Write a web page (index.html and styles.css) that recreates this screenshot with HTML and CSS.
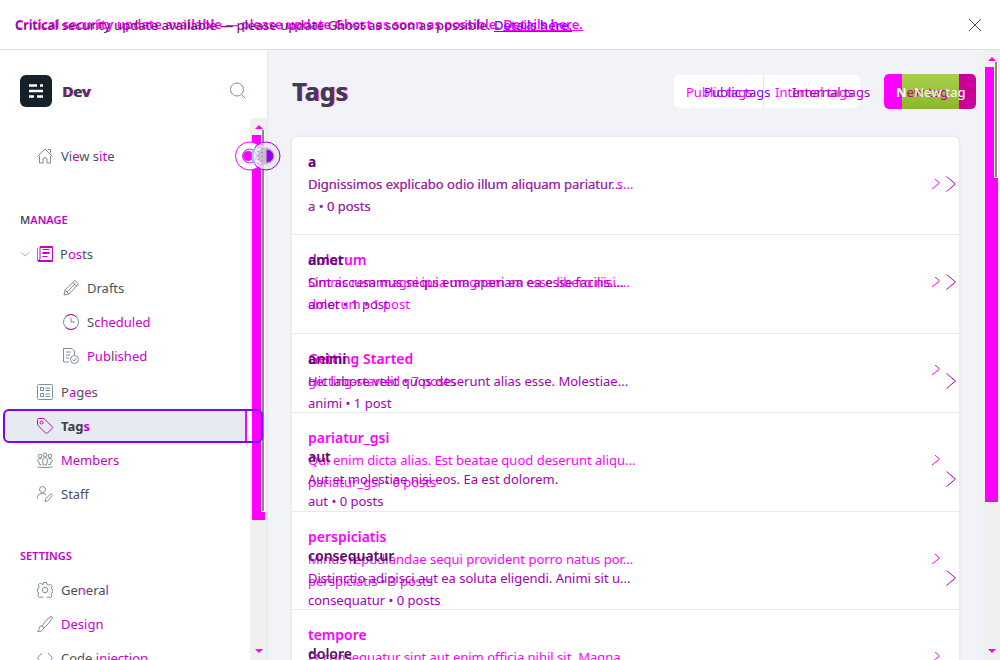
FILE: index.html
```html
<!DOCTYPE html>
<html lang="en">
<head>
<meta charset="utf-8">
<title>Tags</title>
<link rel="stylesheet" href="styles.css">
</head>
<body>
<header class="banner">
  <div class="stack banner-text">
    <p class="new">Critical security update available — please update Ghost as soon as possible. <a href="#">Details here.</a></p>
    <p class="old">Critical security update available — please update Ghost as soon as possible. <a href="#">Details here.</a></p>
  </div>
  <button class="close" aria-label="Close"><svg width="14" height="14" viewBox="0 0 14 14"><path d="M1 1l12 12M13 1L1 13"/></svg></button>
</header>
<div class="app">
  <aside class="sidebar">
    <div class="brand">
      <svg class="logo" width="32" height="32" viewBox="0 0 32 32"><rect width="32" height="32" rx="6" fill="#15212a"/><path d="M9 10.500h8M20 10.500h3M9 16h14M9 21.500h5M17 21.500h6" stroke="#fff" stroke-width="2.500" fill="none"/></svg>
      <strong>Dev</strong>
      <button class="search" aria-label="Search"><svg width="18" height="18" viewBox="0 0 18 18"><circle cx="8" cy="7.500" r="6.500"/><path d="M12.500 12.500l4 4"/></svg></button>
    </div>
    <div class="scroll-area">
      <nav>
        <a class="item" href="#"><svg viewBox="0 0 16 16"><path d="M.5 8.500L8 1l7.500 7.500M2.500 8v7h3.500v-4.500q2-2 4 0V15h3.500V8M11 1.500h2.500V5"/></svg><span>Vi<i>e</i>w s<i>it</i>e</span></a>
        <h2>M<i>ANAGE</i></h2>
        <a class="item posts" href="#"><svg class="caret" viewBox="0 0 10 6"><path d="M.5 1L5 5l4.500-4"/></svg><svg viewBox="0 0 16 16"><path d="M.5 2v13"/><path class="hot" d="M3 .5h12.500v15H1M3 1.500h12M3 1v12.500L1 14.500h14M5.500 3.500h7M5.500 6.500h7M5.500 7.500h7M5.500 10.500h5"/></svg><span>P<i>os</i>ts</span></a>
        <div class="sub">
          <a class="item" href="#"><svg viewBox="0 0 16 16"><path d="M1 15l1-5L12 .5l3.500 3.500L6 14zM2 10l4 4M10 2.500L13.500 6M4 12l8.500-8.500"/></svg><span>Drafts</span></a>
          <a class="item" href="#"><svg viewBox="0 0 16 16"><circle cx="8" cy="8" r="7.500"/><path class="hot" d="M2.700 2.700a7.500 7.500 0 0110.600 0M2.700 13.300a7.500 7.500 0 0010.600 0"/><path d="M8 3.500V8h4"/></svg><span>S<i>cheduled</i></span></a>
          <a class="item" href="#"><svg viewBox="0 0 16 16"><path d="M6 14H.5V.5H9L11.500 3v4M3 4h5M3 7h4M3 10h3"/><circle cx="11.500" cy="11.500" r="4"/><path d="M9.500 11.500l1.500 1.500 2.500-3"/></svg><span><i>Pub</i>l<i>ished</i></span></a>
        </div>
        <a class="item" href="#"><svg viewBox="0 0 16 16"><rect x=".5" y=".5" width="15" height="15" rx="1"/><path d="M3.500 3.500h3v3h-3zM3.500 9.500h3v3h-3zM8.500 4H13M8.500 6.500H13M8.500 10H13M8.500 12.500H13"/></svg><span>P<i>a</i>g<i>e</i>s</span></a>
        <a class="item active" href="#"><svg class="hot" viewBox="0 0 16 16"><path d="M.5 6V1.500l1-1H6q1 0 2 1L15 8.500q1 1 0 2L10.500 15q-1 1-2 0L1 7.500z"/><circle cx="4.500" cy="4.500" r="1.500"/></svg><span>Tag<i>s</i></span></a>
        <a class="item" href="#"><svg viewBox="0 0 16 16"><circle cx="8" cy="3" r="2"/><circle cx="3" cy="4" r="1.800"/><circle cx="13" cy="4" r="1.800"/><path d="M5.500 9q0-3.500 2.500-3.500T10.500 9L9.500 13h-3zM4.500 12.500H2.500L2 10Q.5 10 .5 8.500 1 6.500 4.500 6.500M11.500 12.500h2L14 10q1.500 0 1.500-1.500-.5-2-4-2M.5 15q7.500 1 15 0"/></svg><span><i>Members</i></span></a>
        <a class="item" href="#"><svg viewBox="0 0 16 16"><circle cx="5.500" cy="3.500" r="3"/><path d="M.5 12.500Q0 7.500 5.500 7.500q2 0 3.500 1M8 15.500l.5-2.500 5-5q1.500 0 2 1.500L10.500 15z"/></svg><span>Staff</span></a>
        <h2><i>SETTINGS</i></h2>
        <a class="item" href="#"><svg viewBox="0 0 16 16"><circle cx="8" cy="8" r="2.800"/><path d="M6.500.5h3l.5 2 1.500.6 1.800-1 2 2-1 1.900.5 1.300 1.200.4v2.600l-1.200.4-.6 1.300 1 1.900-2 2-1.700-1-1.500.6-.5 2h-3l-.5-2-1.500-.6-1.800 1-2-2 1-1.900-.5-1.300L.5 9.300V6.700l1.200-.4.5-1.300-1-1.900 2-2 1.700 1L6 2.500z"/></svg><span>Ge<i>n</i>era<i>l</i></span></a>
        <a class="item" href="#"><svg viewBox="0 0 16 16"><path d="M.5 15.500q1.500-1 1.500-3 .5-3 3-2.500 2.500 1 1.500 3-1.500 3-6 2.500zM5 10q4-7 9-9.500 1.500 0 1.300 1.500Q12 8 7 12"/></svg><span><i>Design</i></span></a>
        <a class="item" href="#"><svg viewBox="0 0 16 16"><path d="M5 3L.5 8 5 13M11 3l4.500 5-4.500 5"/></svg><span>Code <i>injection</i></span></a>
      </nav>
      <div class="bar side-bar"><b class="arrow up"></b><div class="thumb"><b class="line"></b></div><b class="arrow down"></b></div>
      <svg class="grip" width="48" height="30" viewBox="0 0 48 30"><circle cx="15.500" cy="15" r="14" fill="#fff" stroke="#f0f"/><circle cx="15.500" cy="15" r="7" stroke="#f0f" fill="none"/><circle cx="14" cy="15" r="5" fill="#f0f"/><circle cx="32" cy="15" r="14" fill="#e8e6ee" fill-opacity=".8" stroke="#a000f0"/><path d="M21 7q-5 8 0 16" stroke="#8fc8ea" fill="none" stroke-width="2"/><circle cx="32" cy="15" r="8.500" fill="#c0c0c4" stroke="none"/><path d="M33 9a6 6 0 010 12z" fill="#9a00f0" stroke="#9a00f0"/><path d="M24 6v18M28 3v24" stroke="#c040e0" stroke-dasharray="1 3"/></svg>
    </div>
  </aside>
  <main>
    <div class="content">
      <div class="heading">
        <h1>Tags</h1>
        <div class="tabs">
          <button class="tab"><span class="new">Public tags</span><span class="old violet">Public tags</span></button>
          <button class="tab"><span class="new">Internal tags</span><span class="old">Internal tags</span></button>
        </div>
        <button class="create"><span class="new"><b>N</b>ew tag</span><span class="old">New tag</span></button>
      </div>
      <div class="list stack">
        <div class="layer new">
          <a class="row" href="#"><div><h3>a</h3><p>Dignissimos explicabo odio illum aliquam pariatur s...</p><p>a • 0 posts</p></div><svg width="9" height="12" viewBox="0 0 9 12"><path d="M4 1l4.500 4L1 11"/></svg></a>
          <a class="row" href="#"><div><h3>dolorum</h3><p>Omnis rem magni ipsa magnam ea esse libero nisi....</p><p>dolorum • 1 post</p></div><svg width="9" height="12" viewBox="0 0 9 12"><path d="M4 1l4.500 4L1 11"/></svg></a>
          <a class="row short" href="#"><div><h3>Getting Started</h3><p>getting-started • 7 posts</p></div><svg width="9" height="12" viewBox="0 0 9 12"><path d="M4 1l4.500 4L1 11"/></svg></a>
          <a class="row" href="#"><div><h3>pariatur_gsi</h3><p>Qui enim dicta alias. Est beatae quod deserunt aliqu...</p><p>pariatur_gsi • 0 posts</p></div><svg width="9" height="12" viewBox="0 0 9 12"><path d="M4 1l4.500 4L1 11"/></svg></a>
          <a class="row" href="#"><div><h3>perspiciatis</h3><p>Minus repudiandae sequi provident porro natus por...</p><p>perspiciatis • 3 posts</p></div><svg width="9" height="12" viewBox="0 0 9 12"><path d="M4 1l4.500 4L1 11"/></svg></a>
          <a class="row" href="#"><div><h3>tempore</h3><p>Et consequatur sint aut enim officia nihil sit. Magna...</p><p>tempore • 0 posts</p></div><svg width="9" height="12" viewBox="0 0 9 12"><path d="M4 1l4.500 4L1 11"/></svg></a>
        </div>
        <div class="layer old">
          <a class="row first" href="#"><div><h3>a</h3><p>Dignissimos explicabo odio illum aliquam pariatur...</p><p>a • 0 posts</p></div><svg width="10" height="16" viewBox="0 0 10 16"><path d="M.5.5L9.500 8l-9 7.500"/></svg></a>
          <a class="row" href="#"><div><h3>amet</h3><p>Sint accusamus sequi eum aperiam ea esse facilis....</p><p>amet • 1 post</p></div><svg width="10" height="16" viewBox="0 0 10 16"><path d="M.5.5L9.500 8l-9 7.500"/></svg></a>
          <a class="row" href="#"><div><h3>animi</h3><p>Hic labore velit quos deserunt alias esse. Molestiae...</p><p>animi • 1 post</p></div><svg width="10" height="16" viewBox="0 0 10 16"><path d="M.5.5L9.500 8l-9 7.500"/></svg></a>
          <a class="row" href="#"><div><h3>aut</h3><p>Aut et molestiae nisi eos. Ea est dolorem.</p><p>aut • 0 posts</p></div><svg width="10" height="16" viewBox="0 0 10 16"><path d="M.5.5L9.500 8l-9 7.500"/></svg></a>
          <a class="row" href="#"><div><h3>consequatur</h3><p>Distinctio adipisci aut ea soluta eligendi. Animi sit u...</p><p>consequatur • 0 posts</p></div><svg width="10" height="16" viewBox="0 0 10 16"><path d="M.5.5L9.500 8l-9 7.500"/></svg></a>
          <a class="row" href="#"><div><h3>dolore</h3></div></a>
        </div>
      </div>
    </div>
    <div class="bar main-bar"><b class="arrow up"></b><div class="thumb"><b class="line"></b></div><b class="arrow down"></b></div>
  </main>
</div>
</body>
</html>
```
FILE: styles.css
```css
* { box-sizing: border-box; }
body { margin: 0; height: 100vh; overflow: hidden; display: flex; flex-direction: column; font: 13px/22px "Noto Sans", sans-serif; color: #4a5157; background: #fff; }
p, h1, h2, h3 { margin: 0; }
a { color: inherit; text-decoration: none; }
button { border: 0; padding: 0; background: none; font: inherit; }
svg { display: block; flex: none; fill: none; stroke: #7c8f9a; }
i { font-style: normal; color: #c800c8; }
.new { color: #f0f; }
.old { color: #a400b2; }
.violet { color: #8a00f0; }
.stack { display: grid; }
.stack > * { grid-area: 1 / 1; }

.banner { flex: none; height: 50px; padding: 0 18px 0 15px; border-bottom: 1px solid #dddfe2; display: flex; align-items: center; justify-content: space-between; }
.banner-text { font-weight: 500; }
.banner a { text-decoration: underline; }
.banner .new { font-weight: 600; }
.banner .old { color: #7a1a80; padding-top: 1px; }
.banner .old a { color: #8000ff; }
.close svg { stroke: #4a5157; }

.app { flex: 1; min-height: 0; display: flex; }
.sidebar { flex: none; width: 268px; display: flex; flex-direction: column; border-right: 1px solid #e3e6ea; }
.brand { flex: none; height: 68px; padding: 14px 20px 0; display: flex; align-items: center; gap: 10px; }
.logo { stroke: none; }
.brand strong { flex: 1; font-size: 15px; color: #394047; text-shadow: 1px 0 #f0f; }
.scroll-area { position: relative; flex: 1; min-height: 0; display: flex; }
nav { flex: 1; min-width: 0; padding: 21px 0 0 3px; }
.item { height: 34px; padding-left: 34px; display: flex; align-items: center; gap: 8px; }
.item svg { width: 16px; height: 16px; }
.item svg.caret { width: 10px; height: 6px; stroke: #abb4be; }
.posts { padding-left: 17px; gap: 7px; }
.sub { margin-bottom: 2px; }
.sub .item { padding-left: 60px; }
.hot { stroke: #c800c8; }
nav h2 { margin: 30px 0 0 17px; font-size: 11px; font-weight: 600; line-height: 34px; }
.item + h2 ~ h2 { margin-top: 28px; }
.active { position: relative; z-index: 2; width: 260px; padding-left: 32px; font-weight: 700; color: #394047; border: 2px solid #8000ff; border-radius: 6px; background: linear-gradient(90deg, #e6ebf1 240px, #f0f 240px 242px, #fff 242px 247px, #f0f 247px 256px, #fff 256px); }

.bar { position: relative; flex: none; width: 17px; background: #f0f0f0; display: flex; flex-direction: column; align-items: center; padding: 7px 0; }
.arrow { border: 4px solid transparent; border-top: 0; border-bottom-color: #f0f; }
.arrow.down { margin-top: auto; border-bottom: 0; border-top: 4px solid #f0f; }
.thumb { position: relative; width: 13px; margin-top: 6px; background: #f0f; }
.line { position: absolute; right: 0; top: -5px; width: 4px; border: 1px solid #fff; border-width: 0 1px 1px; background: #888; }
.side-bar .thumb { height: 73%; }
.side-bar .line { height: 99%; }
.main-bar .thumb { height: 73%; }
.main-bar .line { height: 116px; }
.grip { position: absolute; z-index: 3; right: -15px; top: 23px; }

main { flex: 1; min-width: 0; display: flex; background: #f2f3f8; }
.content { flex: 1; min-width: 0; padding: 24px 24px 0; }
.heading { display: flex; align-items: center; height: 35px; margin: 0 -17px 28px 0; }
h1 { flex: 1; font-size: 25px; line-height: 35px; font-weight: 700; color: #394047; text-shadow: 1px 0 #f0f; }
.tabs { display: flex; height: 33px; background: #fff; border-radius: 5px; margin-right: 24px; }
.tab { position: relative; width: 89px; padding-left: 12px; text-align: left; white-space: nowrap; }
.tab + .tab { width: 97px; border-left: 1px solid #e6eaf0; padding-left: 11px; }
.tab .old { position: absolute; left: 30px; }
.tab + .tab .old { left: 28px; }
.create { position: relative; width: 92px; height: 35px; padding-left: 12px; text-align: left; font-weight: 500; border-radius: 5px; background: linear-gradient(#a9cf4c, #8db72a) 18px 0 / 57px 100% no-repeat, linear-gradient(90deg, #f0f 30%, #cc0099 30%); }
.create .new { color: #c000a8; }
.create .new b { color: #fff; }
.create .old { position: absolute; left: 30px; color: #f2f3e8; }

.list { border-radius: 5px; background: #fff; box-shadow: 0 0 3px #d5d9e0; }
.row { display: flex; align-items: center; justify-content: space-between; padding: 14px 19px 17px 16px; border-bottom: 1px solid #e4ebf2; }
.row:nth-child(even) { padding-bottom: 18px; }
.new .short { padding-bottom: 20px; }
.new svg { stroke: #f0f; }
.old .row { padding-right: 3px; border-color: transparent; }
.old svg { stroke: #b000c0; }
.row h3 { font-size: 14px; line-height: 22px; font-weight: 600; }
.old h3 { color: #551060; }
.first p { color: #85408e; }
```
